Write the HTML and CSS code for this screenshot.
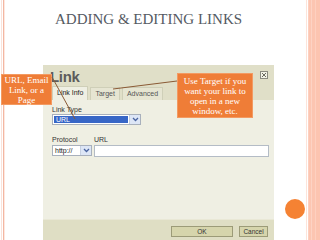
FILE: index.html
```html
<!DOCTYPE html>
<html>
<head>
<meta charset="utf-8">
<link rel="stylesheet" href="styles.css">
</head>
<body>
<div class="slide">
  <div class="edge-left"></div>
  <div class="main">
    <h1 class="title">ADDING &amp; EDITING LINKS</h1>
    <div class="stage">
      <div class="dialog">
        <div class="dlg-head">
          <div class="dlg-title-row">
            <span class="dlg-title">Link</span>
            <svg class="close" width="8" height="8" viewBox="0 0 8 8"><rect x="0.5" y="0.5" width="7" height="7" fill="#f2f2e6" stroke="#8a8a80"/><path d="M2 2L6 6M6 2L2 6" stroke="#6a6a60" stroke-width="1"/></svg>
          </div>
          <div class="tabs">
            <span class="tab active">Link Info</span>
            <span class="tab">Target</span>
            <span class="tab">Advanced</span>
          </div>
        </div>
        <div class="dlg-body">
          <div class="label">Link Type</div>
          <div class="select type">
            <span class="sel-val blue">URL</span>
            <span class="arrow"><svg width="7" height="5" viewBox="0 0 7 5"><path d="M1 1L3.5 3.5L6 1" fill="none" stroke="#4a64a0" stroke-width="1.3"/></svg></span>
          </div>
          <div class="row">
            <div class="field">
              <div class="label">Protocol</div>
              <div class="select proto">
                <span class="sel-val">http://</span>
                <span class="arrow"><svg width="7" height="5" viewBox="0 0 7 5"><path d="M1 1L3.5 3.5L6 1" fill="none" stroke="#4a64a0" stroke-width="1.3"/></svg></span>
              </div>
            </div>
            <div class="field grow">
              <div class="label">URL</div>
              <div class="input"></div>
            </div>
          </div>
        </div>
        <div class="dlg-foot">
          <span class="btn ok">OK</span>
          <span class="btn cancel">Cancel</span>
        </div>
      </div>
      <div class="aside"><span class="dot"></span></div>
    </div>
  </div>
  <div class="edge-right"></div>
</div>
<div class="callout c1">URL, Email<br>Link, or a<br>Page</div>
<div class="callout c2">Use Target if you<br>want your link to<br>open in a new<br>window, etc.</div>
<svg class="leaders" width="320" height="240" viewBox="0 0 320 240">
  <line x1="52" y1="77" x2="75" y2="119" stroke="#8a5a35" stroke-width="1"/>
  <line x1="177" y1="81" x2="113" y2="89" stroke="#8a5a35" stroke-width="1"/>
</svg>
</body>
</html>
```

FILE: styles.css
```css
html, body {
  margin: 0;
  padding: 0;
}
body {
  width: 320px;
  height: 240px;
  overflow: hidden;
  background: #fff;
  position: relative;
  font-family: "Liberation Sans", Arial, sans-serif;
}
.slide {
  display: flex;
  height: 240px;
}
.edge-left {
  width: 6px;
  flex: none;
  background: linear-gradient(to right, #fff 0 1px, #fbe3da 1px 2px, #fff 2px 3px, #f3b7a2 3px 4px, #fde8e0 4px 5px, #fff 5px);
}
.edge-right {
  width: 14px;
  flex: none;
  background: linear-gradient(to right, #fde4da 0 1px, #fff 1px 2px, #fcd0c0 2px 3px, #fcc6b2 3px 5px, #fdd3c4 5px 6px, #fcc5b1 6px 9px, #fdd0c0 9px 10px, #fcc4b0 10px);
}
.main {
  flex: 1;
  display: flex;
  flex-direction: column;
}
.title {
  margin: 0;
  padding: 10px 0 0 49px;
  font-family: "Liberation Serif", "Times New Roman", serif;
  font-weight: normal;
  font-size: 15px;
  line-height: 18px;
  color: #555a62;
  white-space: nowrap;
}
.stage {
  display: flex;
  margin-top: 37px;
  padding-left: 37px;
  flex: 1;
}
.dialog {
  width: 231px;
  display: flex;
  flex-direction: column;
  background: #efefe3;
  font-size: 7px;
  color: #333;
}
.dlg-head {
  background: #e0dfc8;
}
.dlg-title-row {
  height: 21px;
  display: flex;
  align-items: center;
  justify-content: space-between;
  padding: 0 6px 0 7px;
}
.dlg-title {
  font-size: 15px;
  color: #5c5c5c;
  font-weight: bold;
  letter-spacing: -0.3px;
  margin-top: 2px;
}
.close {
  display: block;
  margin-top: -2px;
}
.tabs {
  display: flex;
  gap: 2px;
  padding-left: 9px;
  height: 14px;
  align-items: flex-end;
}
.tab {
  height: 12px;
  line-height: 12px;
  padding: 0 4px;
  border: 1px solid #cfcfb8;
  border-bottom: none;
  background: #e6e5d2;
  color: #555;
}
.tab.active {
  height: 13px;
  background: #efefe3;
  color: #222;
}
.dlg-body {
  height: 119px;
  padding: 6px 0 0 9px;
  box-sizing: border-box;
}
.label {
  line-height: 8px;
  height: 8px;
  color: #333;
}
.select {
  display: flex;
  height: 9px;
  border: 1px solid #a8b0bc;
  background: #fff;
  box-sizing: content-box;
}
.select.type {
  width: 87px;
}
.select.proto {
  width: 38px;
}
.sel-val {
  flex: 1;
  line-height: 9px;
  padding-left: 2px;
  color: #222;
}
.sel-val.blue {
  background: #3766c6;
  color: #fff;
  margin: 1px;
  line-height: 7px;
}
.arrow {
  width: 10px;
  display: flex;
  align-items: center;
  justify-content: center;
  background: #dde6f6;
  border-left: 1px solid #c6d0e2;
}
.row {
  display: flex;
  gap: 2px;
  margin-top: 11px;
  padding-right: 5px;
}
.field .label {
  height: 7px;
  line-height: 7px;
  margin-bottom: 2px;
}
.field.grow {
  flex: 1;
}
.input {
  height: 10px;
  border: 1px solid #b4bcc6;
  background: #fff;
}
.dlg-foot {
  flex: 1;
  background: #dfdec4;
  border-top: 1px solid #e9e8d6;
  display: flex;
  justify-content: flex-end;
  align-items: flex-start;
  gap: 6px;
  padding: 6px 6px 0 0;
}
.btn {
  height: 9px;
  line-height: 9px;
  text-align: center;
  background: #d6d5ac;
  border: 1px solid #9c9b78;
  color: #333;
  font-size: 6.5px;
}
.btn.ok {
  width: 60px;
}
.btn.cancel {
  width: 27px;
}
.aside {
  display: flex;
  align-items: flex-start;
  padding: 134px 0 0 11px;
}
.dot {
  width: 20px;
  height: 20px;
  border-radius: 50%;
  background: #f58233;
}
.callout {
  position: absolute;
  background: #ef7d37;
  border: 1px solid #f39a62;
  color: #fff;
  font-family: "Liberation Serif", "Times New Roman", serif;
  font-size: 9px;
  line-height: 10px;
  text-align: center;
  box-sizing: border-box;
}
.c1 {
  left: 1px;
  top: 74px;
  width: 51px;
  height: 31px;
  padding-top: 0;
}
.c2 {
  left: 177px;
  top: 73px;
  width: 76px;
  height: 45px;
  padding-top: 2px;
}
.leaders {
  position: absolute;
  left: 0;
  top: 0;
  pointer-events: none;
}
```
